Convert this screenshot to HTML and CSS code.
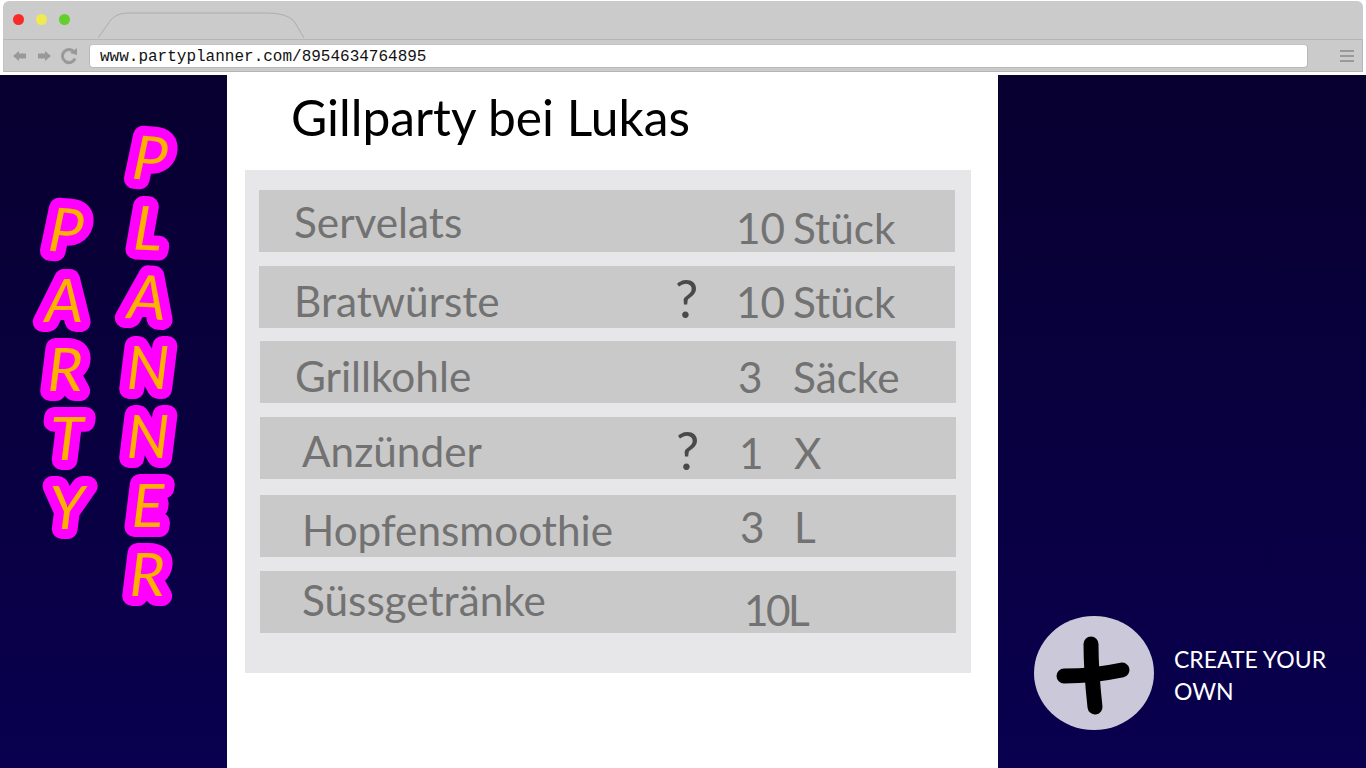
FILE: index.html
```html
<!DOCTYPE html>
<html lang="de">
<head>
  <meta charset="UTF-8">
  <title>Party Planner</title>
  <link rel="stylesheet" href="styles.css">
</head>
<body>

<header class="chrome">
  <div class="tabbar">
    <span class="dot red"></span>
    <span class="dot yellow"></span>
    <span class="dot green"></span>
    <svg class="tab" width="214" height="28" viewBox="0 0 214 28">
      <path d="M0 26 L12 9 Q18 1 30 1 L170 1 Q188 1 196 9 L206 26" fill="#cbcbcb" stroke="#adadad" stroke-width="1"/>
    </svg>
  </div>
  <div class="toolbar">
    <svg class="nav" width="66" height="22" viewBox="0 0 66 22">
      <path d="M1 11 L7 6 V8.5 H14 V13.5 H7 V16 Z" fill="#999"/>
      <path d="M39 11 L33 6 V8.5 H26 V13.5 H33 V16 Z" fill="#999"/>
      <path d="M62 7 A6.5 6.5 0 1 0 63 13.5" fill="none" stroke="#999" stroke-width="3"/>
      <path d="M58 8 L65 3 V10 Z" fill="#999"/>
    </svg>
    <div class="url">www.partyplanner.com/8954634764895</div>
    <div class="burger"><i></i><i></i><i></i></div>
  </div>
</header>

<div class="page">
  <aside class="left">
    <svg class="logo" width="227" height="693" viewBox="0 0 227 693">
      <g class="logo-letters">
        <text x="148" y="105" transform="rotate(5 148 105)">P</text>
        <text x="147" y="175" transform="rotate(3 147 175)">L</text>
        <text x="146" y="244" transform="rotate(3 146 244)">A</text>
        <text x="148" y="314">N</text>
        <text x="148" y="383">N</text>
        <text x="148" y="452">E</text>
        <text x="147" y="521">R</text>
        <text x="64" y="177" transform="rotate(5 64 177)">P</text>
        <text x="64" y="247">A</text>
        <text x="65" y="316">R</text>
        <text x="67" y="385">T</text>
        <text x="67" y="454">Y</text>
      </g>
    </svg>
  </aside>

  <main class="content">
    <h1 class="title">Gillparty bei Lukas</h1>
    <section class="list">
      <div class="row row-1"><span class="name">Servelats</span><span class="ask"></span><span class="qty">10</span><span class="unit">Stück</span></div>
      <div class="row row-2"><span class="name">Bratwürste</span><span class="ask">?</span><span class="qty">10</span><span class="unit">Stück</span></div>
      <div class="row row-3"><span class="name">Grillkohle</span><span class="ask"></span><span class="qty">3</span><span class="unit">Säcke</span></div>
      <div class="row row-4"><span class="name">Anzünder</span><span class="ask">?</span><span class="qty">1</span><span class="unit">X</span></div>
      <div class="row row-5"><span class="name">Hopfensmoothie</span><span class="ask"></span><span class="qty">3</span><span class="unit">L</span></div>
      <div class="row row-6"><span class="name">Süssgetränke</span><span class="ask"></span><span class="qty">10L</span><span class="unit"></span></div>
    </section>
  </main>

  <aside class="right">
    <div class="create">
      <div class="plus">
        <svg width="120" height="114" viewBox="0 0 120 114">
          <path d="M57 28 Q57 55 61 91" fill="none" stroke="#000" stroke-width="15" stroke-linecap="round"/>
          <path d="M30 60 Q60 60 88 54" fill="none" stroke="#000" stroke-width="15" stroke-linecap="round"/>
        </svg>
      </div>
      <div class="create-text">CREATE YOUR OWN</div>
    </div>
  </aside>
</div>

</body>
</html>
```

FILE: styles.css
```css
* { margin: 0; padding: 0; box-sizing: border-box; }
html, body { height: 768px; overflow: hidden; }
body { background: #fff; font-family: 'Lato', 'Open Sans', sans-serif; }

/* browser frame */
.chrome { height: 72px; background: #fff; padding: 1px 3px 0 3px; }
.tabbar { height: 38px; background: #cbcbcb; border-radius: 6px 6px 0 0; display: flex; align-items: center; gap: 12px; padding: 0 0 0 10px; position: relative; }
.dot { width: 11px; height: 11px; border-radius: 50%; margin-top: -2px; }
.red { background: #f92a2a; }
.yellow { background: #eeea50; }
.green { background: #63cf2b; }
.tab { position: absolute; left: 95px; top: 11px; }
.toolbar { height: 33px; background: #cbcbcb; border-top: 1px solid #b5b5b5; border-bottom: 1px solid #b5b5b5; border-left: 1px solid #c4c4c4; border-right: 1px solid #b5b5b5; display: flex; align-items: center; padding-left: 8px; }
.nav { width: 66px; height: 22px; flex: none; }
.url { width: 1219px; height: 24px; margin-left: 11px; background: #fff; border: 1px solid #b9b9b9; border-top-color: #c4c4c4; border-radius: 4px; font-family: 'Liberation Mono', monospace; font-size: 16px; line-height: 25px; padding-left: 10px; color: #111; }
.burger { margin-left: 32px; width: 14px; display: flex; flex-direction: column; gap: 3px; }
.burger i { display: block; height: 2px; background: #999; }

.page { height: 693px; margin-top: 3px; display: grid; grid-template-columns: 227px 771px 368px; }
.left, .right { background: linear-gradient(180deg, #08002f 0%, #09004f 100%); }

/* logo */
.logo { display: block; }
.logo-letters text { font-family: 'Lato', sans-serif; font-style: italic; font-size: 61px; text-anchor: middle; fill: #ffb000; stroke: #ff00ff; stroke-width: 20px; stroke-linejoin: round; paint-order: stroke fill; }

/* list */
.content { background: #fff; padding: 16px 27px 0 18px; }
.title { font-size: 49.7px; font-weight: 400; line-height: 52px; color: #000; padding-left: 46px; }
.list { margin-top: 27px; height: 503px; background: #e7e7e9; padding: 20px 16px 0 14px; }

.row { height: 62px; width: 696px; background: #c9c9c9; color: #727272; font-size: 42.3px; line-height: 50px; display: grid; grid-template-columns: 416px 61px 57px 1fr; align-items: start; margin-bottom: 14px; }
.name { padding-left: 35px; margin-top: var(--name-y); }
.qty, .unit { margin-top: var(--qty-y); }
.ask { font-size: 52px; color: #4a4a4a; margin-top: 7px; }

.row-1 { --name-y: 7px; --qty-y: 13px; }
.row-2 { --name-y: 10px; --qty-y: 11px; }
.row-3 { --name-y: 10px; --qty-y: 11px; margin-left: 1px; margin-top: -1px; grid-template-columns: 416px 62px 55px 1fr; }
.row-4 { --name-y: 9px; --qty-y: 11px; margin-left: 1px; margin-bottom: 16px; grid-template-columns: 416px 63px 55px 1fr; }
.row-5 { --name-y: 10px; --qty-y: 7px; margin-left: 1px; grid-template-columns: 416px 64px 54px 1fr; }
.row-6 { --name-y: 4px; --qty-y: 14px; margin-left: 1px; grid-template-columns: 416px 68px 100px 1fr; }
.row-4 .name, .row-5 .name, .row-6 .name { padding-left: 42px; }
.row-4 .ask { margin-top: 8px; }
.row-6 .qty { letter-spacing: -2.5px; }

/* create button */
.create { display: flex; align-items: center; gap: 20px; padding: 541px 0 0 36px; }
.plus { width: 120px; height: 114px; border-radius: 50%; background: #cbc9d9; flex: none; }
.plus svg { display: block; }
.create-text { width: 170px; color: #fff; font-size: 23px; line-height: 32px; padding-top: 4px; }
```
